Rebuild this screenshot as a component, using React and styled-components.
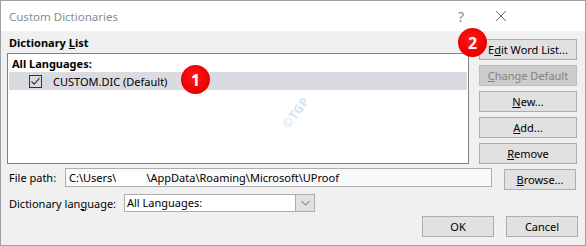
import React from 'react'
import styled, { createGlobalStyle } from 'styled-components'

const Global = createGlobalStyle`
  html, body { margin: 0; padding: 0; background: #f0f0f0; }
  body { font-family: "Noto Sans", "Open Sans", sans-serif; font-size: 11px; color: #000; }
  * { box-sizing: border-box; }
`

const buttons = [
  { label: 'Edit Word List...', pos: 1 },
  { label: 'Change Default', pos: 0, disabled: true },
  { label: 'New...', pos: 0 },
  { label: 'Add...', pos: 0 },
  { label: 'Remove', pos: 0 },
]

const Access = ({ text, pos }) => (
  <>
    {text.slice(0, pos)}
    <u>{text[pos]}</u>
    {text.slice(pos + 1)}
  </>
)

const App = () => {
  return (
    <>
      <Global />
      <Window>
        <TitleBar>
          <Title>Custom Dictionaries</Title>
          <TitleIcon>?</TitleIcon>
          <TitleIcon>
            <svg width="12" height="12" viewBox="0 0 12 12">
              <path d="M1 1 L11 11 M11 1 L1 11" stroke="#6a6a6a" strokeWidth="1" />
            </svg>
          </TitleIcon>
        </TitleBar>
        <Body>
          <Top>
            <ListColumn>
              <GroupLabel>
                Dictionary <u>L</u>ist
              </GroupLabel>
              <ListBox>
                <GroupRow>All Languages:</GroupRow>
                <ItemRow selected>
                  <Check>
                    <svg width="11" height="11" viewBox="0 0 11 11">
                      <path d="M1.5 5.5 L4.2 8.2 L9.5 2.2" fill="none" stroke="#333" strokeWidth="1.1" />
                    </svg>
                  </Check>
                  CUSTOM.DIC (Default)
                  <Badge>1</Badge>
                </ItemRow>
                <Watermark>©TGP</Watermark>
              </ListBox>
            </ListColumn>
            <ButtonColumn>
              {buttons.map((b, i) => (
                <Button key={b.label} disabled={b.disabled}>
                  <Access text={b.label} pos={b.pos} />
                  {i === 0 && <Badge corner>2</Badge>}
                </Button>
              ))}
            </ButtonColumn>
          </Top>
          <FieldRow>
            <FieldLabel width={58}>File path:</FieldLabel>
            <PathInput>
              C:\Users\<Redacted />\AppData\Roaming\Microsoft\UProof
            </PathInput>
            <Button small offset={1}>
              <u>B</u>rowse...
            </Button>
          </FieldRow>
          <LangRow>
            <FieldLabel width={117}>
              Dictionary lan<u>g</u>uage:
            </FieldLabel>
            <Select>
              <SelectValue>All Languages:</SelectValue>
              <SelectArrow>
                <svg width="9" height="6" viewBox="0 0 9 6">
                  <path d="M0.5 1 L4.5 5 L8.5 1" fill="none" stroke="#606060" strokeWidth="1" />
                </svg>
              </SelectArrow>
            </Select>
          </LangRow>
          <Footer>
            <Button small>OK</Button>
            <Button small>Cancel</Button>
          </Footer>
        </Body>
      </Window>
    </>
  )
}

const Window = styled.div`
  width: 586px;
  height: 246px;
  border: 1px solid #a0a0a0;
  background: #f0f0f0;
  display: flex;
  flex-direction: column;
  overflow: hidden;
`

const TitleBar = styled.div`
  height: 30px;
  background: #fff;
  display: flex;
  align-items: center;
  padding: 0 0 0 8px;
  flex-shrink: 0;
`

const Title = styled.div`
  flex: 1;
  color: #878b93;
  font-size: 11.5px;
  padding-top: 1px;
`

const TitleIcon = styled.div`
  width: 40px;
  height: 30px;
  display: flex;
  align-items: center;
  justify-content: center;
  color: #8a8a8a;
  font-size: 14px;

  &:last-child {
    margin-right: 64px;
  }
`

const Body = styled.div`
  flex: 1;
  display: flex;
  flex-direction: column;
  padding: 0 7px 8px 6px;
`

const Top = styled.div`
  display: flex;
  gap: 10px;
`

const ListColumn = styled.div`
  width: 462px;
  display: flex;
  flex-direction: column;
`

const GroupLabel = styled.div`
  height: 22px;
  line-height: 20px;
  padding: 2px 0 0 2px;
  font-weight: bold;
`

const ListBox = styled.div`
  position: relative;
  height: 111px;
  background: #fff;
  border: 1px solid #828282;
  padding: 1px;
`

const GroupRow = styled.div`
  height: 17px;
  line-height: 17px;
  padding-left: 3px;
  font-weight: bold;
`

const ItemRow = styled.div`
  position: relative;
  height: 18px;
  display: flex;
  align-items: center;
  padding-left: 20px;
  background: ${p => (p.selected ? '#dadbe1' : 'transparent')};
`

const Check = styled.span`
  width: 13px;
  height: 13px;
  border: 1px solid #333;
  display: flex;
  align-items: center;
  justify-content: center;
  margin-right: 11px;
`

const Badge = styled.span`
  position: absolute;
  width: 29px;
  height: 29px;
  border-radius: 50%;
  background: radial-gradient(circle at 45% 40%, #ff1a1a 0%, #ee0000 60%, #d40000 100%);
  color: #fff;
  font-size: 16px;
  font-weight: bold;
  display: flex;
  align-items: center;
  justify-content: center;
  left: ${p => (p.corner ? '-22px' : '172px')};
  top: ${p => (p.corner ? '-12px' : '-7px')};
  z-index: 2;
`

const Watermark = styled.span`
  position: absolute;
  left: 270px;
  top: 50px;
  transform: rotate(-52deg);
  color: #d3e3f3;
  font-size: 12px;
  font-weight: bold;
  letter-spacing: 0.5px;
`

const ButtonColumn = styled.div`
  width: 98px;
  display: flex;
  flex-direction: column;
  gap: 5px;
  padding-top: 8px;
`

const Button = styled.button`
  position: relative;
  width: ${p => (p.small ? '72px' : '98px')};
  height: 21px;
  margin-top: ${p => p.offset || 0}px;
  flex-shrink: 0;
  background: ${p => (p.disabled ? '#cccccc' : '#e1e1e1')};
  border: 1px solid ${p => (p.disabled ? '#bfbfbf' : '#adadad')};
  color: ${p => (p.disabled ? '#838383' : '#000')};
  font-family: inherit;
  font-size: 11px;
  padding: 0;
  display: flex;
  align-items: center;
  justify-content: center;
`

const FieldRow = styled.div`
  display: flex;
  align-items: flex-start;
  margin-top: 4px;
  height: 22px;
  gap: 12px;
`

const FieldLabel = styled.div`
  width: ${p => p.width}px;
  flex-shrink: 0;
  padding-left: 2px;
  line-height: 19px;
  white-space: nowrap;
`

const PathInput = styled.div`
  width: 427px;
  height: 19px;
  margin-left: -12px;
  background: #fafafa;
  border: 1px solid #adadad;
  line-height: 17px;
  padding-left: 3px;
  white-space: nowrap;
  overflow: hidden;
`

const Redacted = styled.span`
  display: inline-block;
  width: 30px;
  height: 15px;
  vertical-align: middle;
  background: #fff;
`

const LangRow = styled.div`
  display: flex;
  align-items: center;
  margin-top: 4px;
  height: 18px;
`

const Select = styled.div`
  width: 191px;
  height: 18px;
  display: flex;
  border: 1px solid #adadad;
  background: #fff;
`

const SelectValue = styled.div`
  flex: 1;
  line-height: 16px;
  padding-left: 2px;
`

const SelectArrow = styled.div`
  width: 19px;
  background: #e1e1e1;
  border-left: 1px solid #adadad;
  display: flex;
  align-items: center;
  justify-content: center;
`

const Footer = styled.div`
  display: flex;
  justify-content: flex-end;
  gap: 12px;
  margin-top: 4px;
`

export default App
